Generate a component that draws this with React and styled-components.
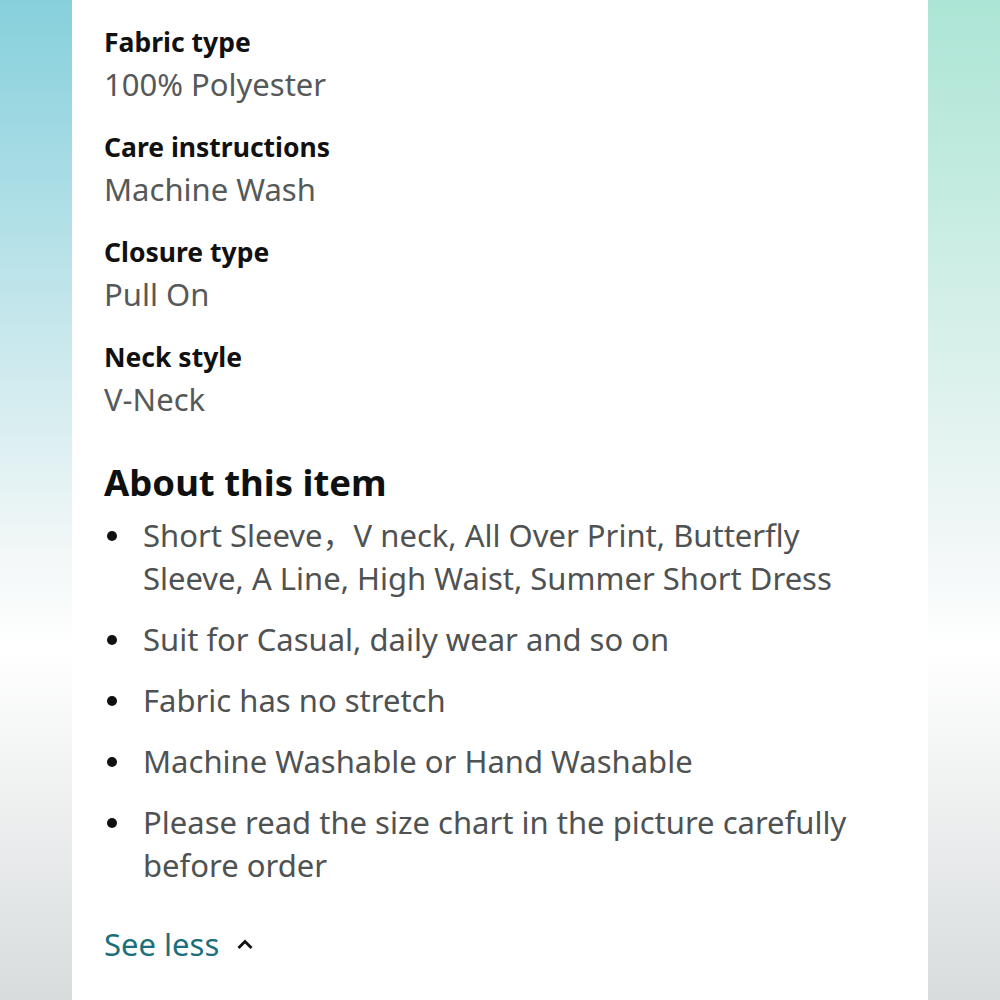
import React from 'react'
import styled, { createGlobalStyle } from 'styled-components'

const Global = createGlobalStyle`
  html, body { margin: 0; padding: 0; }
  body { font-family: "Noto Sans", "Noto Sans CJK SC", sans-serif; }
`

const Page = styled.div`
  display: grid;
  grid-template-columns: 72px 1fr 72px;
  height: 1000px;
  overflow: hidden;
`

const Side = styled.div`
  background: linear-gradient(180deg, ${p => p.top} 0%, #f2f7f7 55%, #ffffff 65%, #d8dcdd 100%);
`

const Card = styled.div`
  background: #fff;
  padding: 26px 40px 0 32px;
`

const Spec = styled.div`
  display: flex;
  flex-direction: column;
  gap: 6px;
  margin-bottom: 27px;
`

const Label = styled.div`
  font-size: 26.5px;
  line-height: 32px;
  font-weight: 700;
  color: #111;
`

const Value = styled.div`
  font-size: 31px;
  line-height: 40px;
  color: #565959;
`

const Heading = styled.h2`
  margin: 41px 0 10px;
  font-size: 36.5px;
  line-height: 44px;
  font-weight: 700;
  color: #0f1111;
`

const List = styled.ul`
  list-style: none;
  margin: 0;
  padding: 0;
  display: flex;
  flex-direction: column;
  gap: 18px;
`

const Item = styled.li`
  position: relative;
  padding-left: 39px;
  font-size: 31px;
  line-height: 43px;
  color: #4f5252;

  &::before {
    content: '';
    position: absolute;
    left: 3px;
    top: 17px;
    width: 10px;
    height: 10px;
    border-radius: 50%;
    background: #0f1111;
  }
`

const SeeLess = styled.div`
  display: flex;
  align-items: center;
  gap: 17px;
  margin-top: 37px;
  font-size: 31px;
  line-height: 40px;
  color: #1b6f7d;
`

const specs = [
  ['Fabric type', '100% Polyester'],
  ['Care instructions', 'Machine Wash'],
  ['Closure type', 'Pull On'],
  ['Neck style', 'V-Neck'],
]

const bullets = [
  'Short Sleeve，V neck, All Over Print, Butterfly Sleeve, A Line, High Waist, Summer Short Dress',
  'Suit for Casual, daily wear and so on',
  'Fabric has no stretch',
  'Machine Washable or Hand Washable',
  'Please read the size chart in the picture carefully before order',
]

export default function App() {
  return (
    <>
      <Global />
      <Page>
        <Side top="#86d0dc" />
        <Card>
          {specs.map(([l, v]) => (
            <Spec key={l}>
              <Label>{l}</Label>
              <Value>{v}</Value>
            </Spec>
          ))}
          <Heading>About this item</Heading>
          <List>
            {bullets.map(b => <Item key={b}>{b}</Item>)}
          </List>
          <SeeLess>
            See less
            <svg width="18" height="12" viewBox="0 0 18 12">
              <path d="M2.5 10 L9 3.5 L15.5 10" fill="none" stroke="#111" strokeWidth="2.8" />
            </svg>
          </SeeLess>
        </Card>
        <Side top="#ace5d5" />
      </Page>
    </>
  )
}
